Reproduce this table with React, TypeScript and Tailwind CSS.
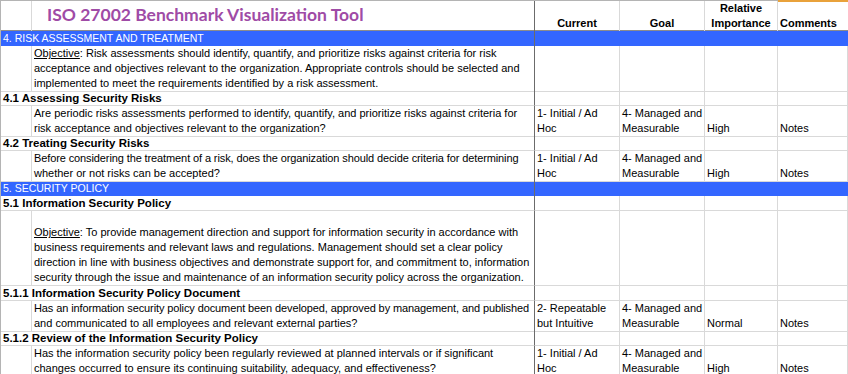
import React from "react";

type Line = string | { text: string; tight: true };
type QRow = {
  kind: "q";
  lines: Line[];
  current: string[];
  goal: string[];
  importance: string;
  comments: string;
};
type HRow = { kind: "h"; title: string };
type BRow = { kind: "band"; title: string };
type ORow = { kind: "obj"; lines: Line[]; height: "h-[45px]" | "h-[75px]" };
type Row = QRow | HRow | BRow | ORow;

const rows: Row[] = [
  { kind: "band", title: "4. RISK ASSESSMENT AND TREATMENT" },
  {
    kind: "obj",
    height: "h-[45px]",
    lines: [
      ": Risk assessments should identify, quantify, and prioritize risks against criteria for risk",
      "acceptance and objectives relevant to the organization. Appropriate controls should be selected and",
      "implemented to meet the requirements identified by a risk assessment.",
    ],
  },
  { kind: "h", title: "4.1 Assessing Security Risks" },
  {
    kind: "q",
    lines: [
      "Are periodic risks assessments performed to identify, quantify, and prioritize risks against criteria for",
      "risk acceptance and objectives relevant to the organization?",
    ],
    current: ["1- Initial / Ad", "Hoc"],
    goal: ["4- Managed and", "Measurable"],
    importance: "High",
    comments: "Notes",
  },
  { kind: "h", title: "4.2 Treating Security Risks" },
  {
    kind: "q",
    lines: [
      { text: "Before considering the treatment of a risk, does the organization should decide criteria for determining", tight: true },
      "whether or not risks can be accepted?",
    ],
    current: ["1- Initial / Ad", "Hoc"],
    goal: ["4- Managed and", "Measurable"],
    importance: "High",
    comments: "Notes",
  },
  { kind: "band", title: "5. SECURITY POLICY" },
  { kind: "h", title: "5.1 Information Security Policy" },
  {
    kind: "obj",
    height: "h-[75px]",
    lines: [
      ": To provide management direction and support for information security in accordance with",
      "business requirements and relevant laws and regulations. Management should set a clear policy",
      "direction in line with business objectives and demonstrate support for, and commitment to, information",
      "security through the issue and maintenance of an information security policy across the organization.",
    ],
  },
  { kind: "h", title: "5.1.1 Information Security Policy Document" },
  {
    kind: "q",
    lines: [
      { text: "Has an information security policy document been developed, approved by management, and published", tight: true },
      "and communicated to all employees and relevant external parties?",
    ],
    current: ["2- Repeatable", "but Intuitive"],
    goal: ["4- Managed and", "Measurable"],
    importance: "Normal",
    comments: "Notes",
  },
  { kind: "h", title: "5.1.2 Review of the Information Security Policy" },
  {
    kind: "q",
    lines: [
      "Has the information security policy been regularly reviewed at planned intervals or if significant",
      "changes occurred to ensure its continuing suitability, adequacy, and effectiveness?",
    ],
    current: ["1- Initial / Ad", "Hoc"],
    goal: ["4- Managed and", "Measurable"],
    importance: "High",
    comments: "Notes",
  },
];

const grid = "grid grid-cols-[31px_503px_85px_85px_73px_1fr]";
const cell = "border-r border-b border-[#d9d9d9] flex flex-col justify-end pl-[2px] whitespace-nowrap overflow-visible";
const divider = "border-r border-r-[#6b6b6b] border-b border-b-[#d9d9d9]";

function Lines({ lines }: { lines: Line[] }) {
  return (
    <>
      {lines.map((l, i) =>
        typeof l === "string" ? (
          <div key={i} className="h-[15px] leading-[15px]">
            {l}
          </div>
        ) : (
          <div key={i} className="h-[15px] leading-[15px] tracking-[-0.11px]">
            {l.text}
          </div>
        )
      )}
    </>
  );
}

function EmptyValueCells() {
  return (
    <>
      <div className={cell} />
      <div className={cell} />
      <div className={cell} />
      <div className={cell} />
    </>
  );
}

function SheetRow({ row }: { row: Row }) {
  if (row.kind === "band") {
    return (
      <div className={`${grid} h-[15px] bg-[#3366ff] text-white`}>
        <div className="col-span-2 border-r border-r-[#6b6b6b] pl-[2px] leading-[15px] text-[10.5px] whitespace-nowrap">
          {row.title}
        </div>
        <div className="col-span-4" />
      </div>
    );
  }
  if (row.kind === "h") {
    return (
      <div className={`${grid} h-[15px]`}>
        <div className={`col-span-2 ${divider} pl-[2px] leading-[14px] font-bold text-[11.5px] whitespace-nowrap`}>
          {row.title}
        </div>
        <EmptyValueCells />
      </div>
    );
  }
  if (row.kind === "obj") {
    const [first, ...rest] = row.lines;
    return (
      <div className={`${grid} ${row.height}`}>
        <div className={cell} />
        <div className={`${divider} flex flex-col justify-end pl-[2px] whitespace-nowrap`}>
          <div className="h-[15px] leading-[15px]">
            <span className="underline underline-offset-[1px]">Objective</span>
            {typeof first === "string" ? first : first.text}
          </div>
          <Lines lines={rest} />
        </div>
        <EmptyValueCells />
      </div>
    );
  }
  return (
    <div className={`${grid} h-[30px]`}>
      <div className={cell} />
      <div className={`${divider} flex flex-col justify-end pl-[2px] whitespace-nowrap`}>
        <Lines lines={row.lines} />
      </div>
      <div className={cell}>
        <Lines lines={row.current} />
      </div>
      <div className={cell}>
        <Lines lines={row.goal} />
      </div>
      <div className={cell}>
        <Lines lines={[row.importance]} />
      </div>
      <div className={cell}>
        <Lines lines={[row.comments]} />
      </div>
    </div>
  );
}

export default function App() {
  return (
    <div className="w-[848px] h-[374px] overflow-hidden bg-white text-black text-[11px] font-['Liberation_Sans',Arial,sans-serif]">
      <div className="border-t border-l border-[#b4b4b4]">
        {/* heading row */}
        <div className={`${grid} h-[30px] border-b border-[#8c8c8c]`}>
          <div className="border-r border-[#d9d9d9]" />
          <div className="border-r border-r-[#6b6b6b] pl-[15px] pt-[3px] whitespace-nowrap font-['Lato',sans-serif] font-bold text-[17.5px] leading-[22px] text-[#9f4ba6]">
            ISO 27002 Benchmark Visualization Tool
          </div>
          <div className="border-r border-[#d9d9d9] flex flex-col justify-end items-center font-bold leading-[15px]">
            Current
          </div>
          <div className="border-r border-[#d9d9d9] flex flex-col justify-end items-center font-bold leading-[15px]">
            Goal
          </div>
          <div className="border-r border-[#d9d9d9] flex flex-col justify-end items-center font-bold leading-[15px]">
            <div>Relative</div>
            <div>Importance</div>
          </div>
          <div className="relative flex flex-col justify-end pl-[2px] font-bold leading-[15px]">
            <div className="absolute left-0 right-0 -top-px h-[2px] bg-[#e9a23b]" />
            Comments
          </div>
        </div>
        {rows.map((r, i) => (
          <SheetRow key={i} row={r} />
        ))}
      </div>
    </div>
  );
}
